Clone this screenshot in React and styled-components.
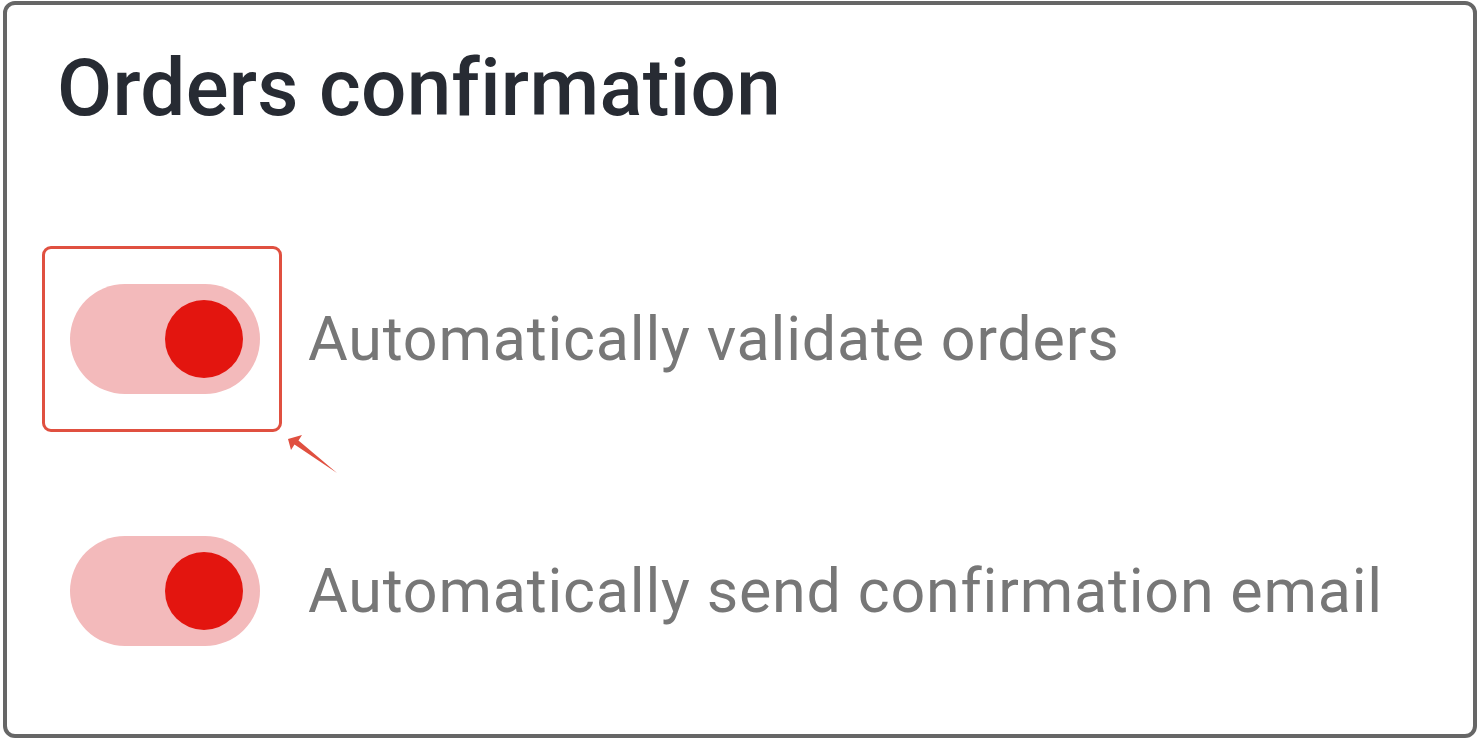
import React from 'react';
import styled, { createGlobalStyle } from 'styled-components';

const GlobalStyle = createGlobalStyle`
  html, body {
    margin: 0;
    padding: 0;
    background: #ffffff;
  }
  body {
    font-family: Roboto, "Liberation Sans", sans-serif;
  }
`;

const Frame = styled.div`
  box-sizing: border-box;
  width: 1474px;
  height: 737px;
  margin: 1px 0 0 3px;
  border: 4px solid #666666;
  border-radius: 12px;
  padding: 43px 0 0 50px;
  display: flex;
  flex-direction: column;
`;

const Title = styled.h1`
  margin: 0;
  font-family: Roboto, "Liberation Sans", sans-serif;
  font-weight: 500;
  font-size: 80px;
  line-height: 80px;
  color: #272b33;
  letter-spacing: 0.3px;
`;

const Options = styled.div`
  display: flex;
  flex-direction: column;
  gap: 142px;
  margin-top: 156px;
  padding-left: 13px;
`;

const Row = styled.label`
  display: flex;
  align-items: center;
  gap: 48px;
`;

const ToggleWrap = styled.div`
  position: relative;
  flex: none;
`;

const Track = styled.div`
  width: 190px;
  height: 110px;
  border-radius: 55px;
  background: ${({ $on }) => ($on ? '#f3babb' : '#d9d9d9')};
  display: flex;
  align-items: center;
  justify-content: ${({ $on }) => ($on ? 'flex-end' : 'flex-start')};
  padding: 0 17px;
  box-sizing: border-box;
`;

const Knob = styled.div`
  width: 78px;
  height: 78px;
  border-radius: 50%;
  background: ${({ $on }) => ($on ? '#e3150f' : '#ffffff')};
`;

const Label = styled.span`
  font-family: Roboto, "Liberation Sans", sans-serif;
  font-size: 61px;
  color: #777777;
  line-height: 1;
  letter-spacing: 0.8px;
`;

const Highlight = styled.div`
  position: absolute;
  left: -28px;
  top: -38px;
  width: 240px;
  height: 186px;
  box-sizing: border-box;
  border: 3px solid #e05040;
  border-radius: 9px;
  pointer-events: none;
`;

const Pointer = styled.svg`
  position: absolute;
  left: 212px;
  top: 148px;
  overflow: visible;
`;

const Toggle = ({ on, highlighted }) => (
  <ToggleWrap>
    <Track $on={on}>
      <Knob $on={on} />
    </Track>
    {highlighted && (
      <>
        <Highlight />
        <Pointer width="60" height="50" viewBox="0 0 60 50">
          <polygon
            points="6,7 20,3 16.5,8.5 55,41 12.5,12.5 9,18"
            fill="#e05040"
          />
        </Pointer>
      </>
    )}
  </ToggleWrap>
);

export default function App() {
  return (
    <>
      <GlobalStyle />
      <Frame>
        <Title>Orders confirmation</Title>
        <Options>
          <Row>
            <Toggle on highlighted />
            <Label>Automatically validate orders</Label>
          </Row>
          <Row>
            <Toggle on />
            <Label>Automatically send confirmation email</Label>
          </Row>
        </Options>
      </Frame>
    </>
  );
}
